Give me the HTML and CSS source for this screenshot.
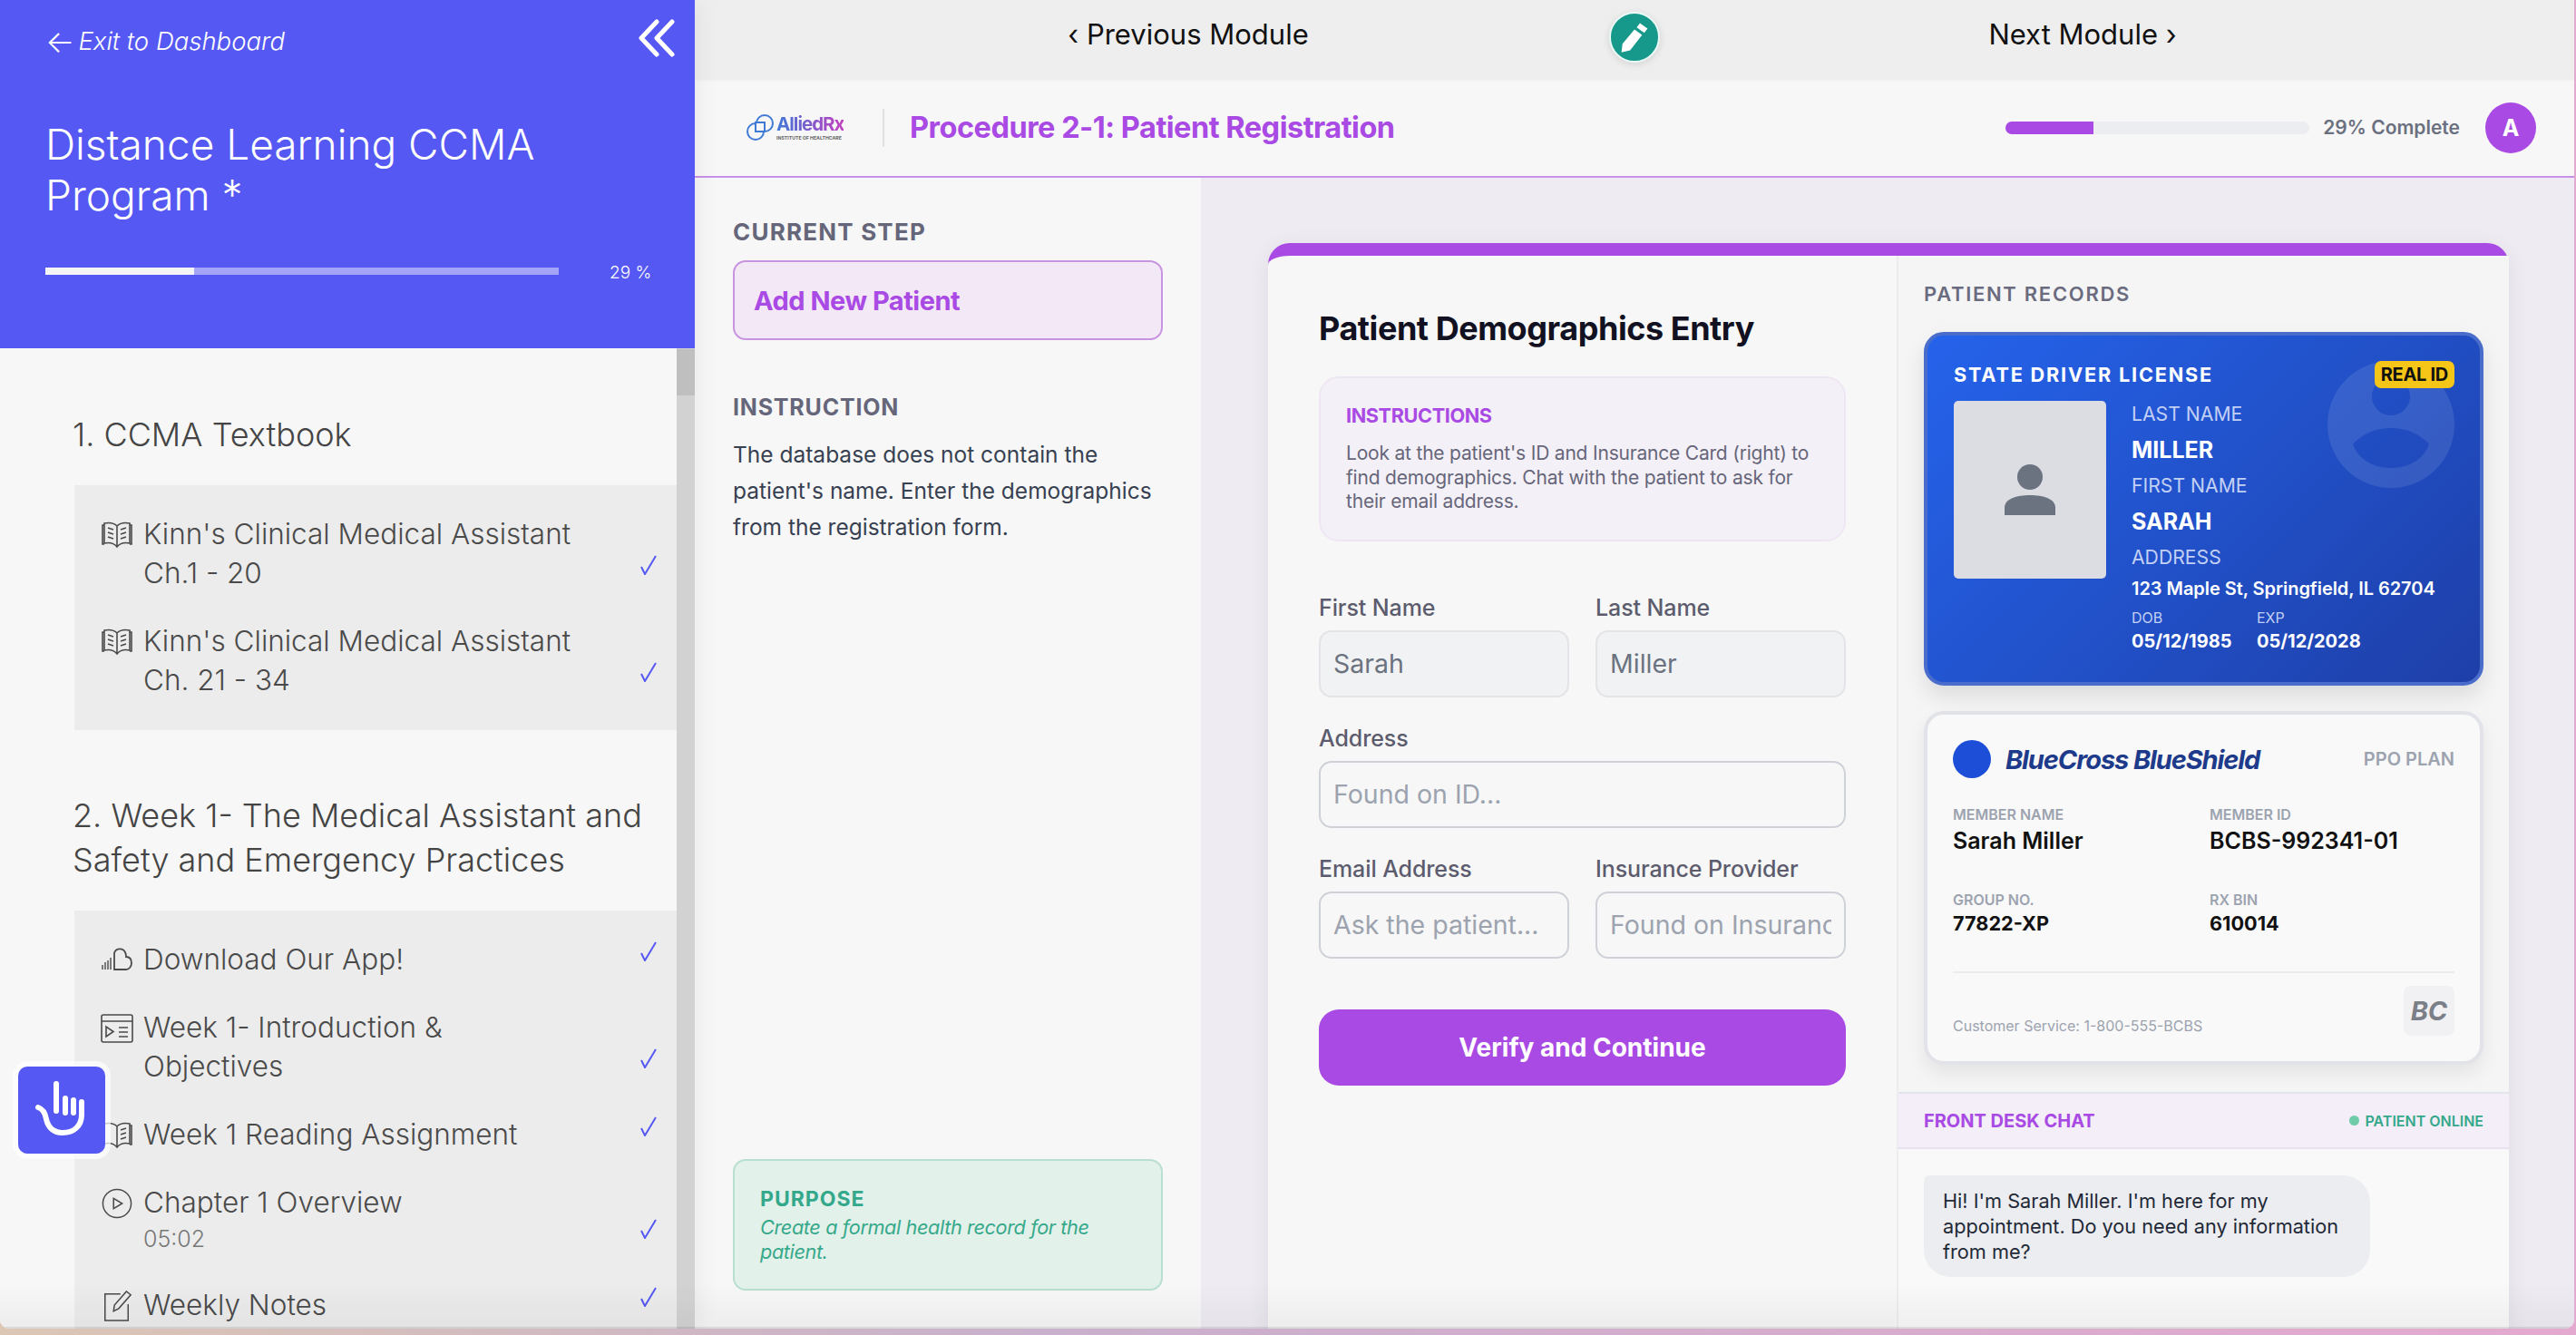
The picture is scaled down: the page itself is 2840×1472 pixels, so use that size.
FILE: index.html
```html
<!DOCTYPE html>
<html lang="en">
<head>
  <meta charset="UTF-8" />
  <title>Procedure 2-1: Patient Registration</title>
  <link rel="stylesheet" href="styles.css">
</head>
<body>
  <div class="frame">

    <aside class="sidebar">
      <div class="side-head">
        <div class="side-top">
          <a class="exit-link"><span class="exit-arrow">&#8592;</span>Exit to Dashboard</a>
          <svg class="collapse" width="40" height="42" viewBox="0 0 40 42" fill="none" stroke="#fff" stroke-width="5" stroke-linecap="round" stroke-linejoin="round">
            <path d="M20 3 3 21l17 18"></path>
            <path d="M37 3 20 21l17 18"></path>
          </svg>
        </div>
        <h1 class="course-title">Distance Learning CCMA Program *</h1>
        <div class="course-progress">
          <div class="course-bar"><div class="course-fill"></div></div>
          <span class="course-pct">29 %</span>
        </div>
      </div>

      <div class="side-body">
        <div class="side-list">
          <h3 class="section-title">1. CCMA Textbook</h3>
          <div class="lesson-group">
            <div class="lesson">
              <svg class="lesson-icon" viewBox="0 0 36 32" fill="none" stroke="#4a4a4a" stroke-width="1.6"><path d="M18 7C14 3 9 3 4 4v22c5-1 10-1 14 4 4-5 9-5 14-4V4c-5-1-10-1-14 3Zm0 0v23"></path><path d="M4 6H2v21h2M32 6h2v21h-2M8 9l6 2M8 14l6 2M8 19l6 2M28 9l-6 2M28 14l-6 2M28 19l-6 2"></path></svg>
              <div class="lesson-text">Kinn's Clinical Medical Assistant Ch.1 - 20</div>
              <svg class="check" width="20" height="22" viewBox="0 0 20 22" fill="none" stroke="#5558f2" stroke-width="2"><path d="M2 13l4 8L18 1"></path></svg>
            </div>
            <div class="lesson">
              <svg class="lesson-icon" viewBox="0 0 36 32" fill="none" stroke="#4a4a4a" stroke-width="1.6"><path d="M18 7C14 3 9 3 4 4v22c5-1 10-1 14 4 4-5 9-5 14-4V4c-5-1-10-1-14 3Zm0 0v23"></path><path d="M4 6H2v21h2M32 6h2v21h-2M8 9l6 2M8 14l6 2M8 19l6 2M28 9l-6 2M28 14l-6 2M28 19l-6 2"></path></svg>
              <div class="lesson-text">Kinn's Clinical Medical Assistant Ch. 21 - 34</div>
              <svg class="check" width="20" height="22" viewBox="0 0 20 22" fill="none" stroke="#5558f2" stroke-width="2"><path d="M2 13l4 8L18 1"></path></svg>
            </div>
          </div>

          <h3 class="section-title section-next">2. Week 1- The Medical Assistant and Safety and Emergency Practices</h3>
          <div class="lesson-group">
            <div class="lesson">
              <svg class="lesson-icon" viewBox="0 0 36 32" fill="none" stroke="#4a4a4a" stroke-width="1.4"><path d="M2 22v5M5 19v8M8 17v10M11 14v13"></path><path d="M15 27V9c1-5 9-7 12-1 1 2 1 3 1 5 4 0 6 3 6 7 0 4-3 7-6 7H15Z" stroke-width="1.8"></path></svg>
              <div class="lesson-text">Download Our App!</div>
              <svg class="check" width="20" height="22" viewBox="0 0 20 22" fill="none" stroke="#5558f2" stroke-width="2"><path d="M2 13l4 8L18 1"></path></svg>
            </div>
            <div class="lesson">
              <svg class="lesson-icon icon-tall" viewBox="0 0 36 32" fill="none" stroke="#4a4a4a" stroke-width="1.6"><rect x="1" y="1" width="34" height="30" rx="2"></rect><path d="M1 8h34M6 14v11l8-5.500ZM20 15h10M20 20h10M20 25h10"></path></svg>
              <div class="lesson-text">Week 1- Introduction &amp; Objectives</div>
              <svg class="check" width="20" height="22" viewBox="0 0 20 22" fill="none" stroke="#5558f2" stroke-width="2"><path d="M2 13l4 8L18 1"></path></svg>
            </div>
            <div class="lesson">
              <svg class="lesson-icon" viewBox="0 0 36 32" fill="none" stroke="#4a4a4a" stroke-width="1.6"><path d="M18 7C14 3 9 3 4 4v22c5-1 10-1 14 4 4-5 9-5 14-4V4c-5-1-10-1-14 3Zm0 0v23"></path><path d="M32 6h2v21h-2M28 9l-6 2M28 14l-6 2M28 19l-6 2"></path></svg>
              <div class="lesson-text">Week 1 Reading Assignment</div>
              <svg class="check" width="20" height="22" viewBox="0 0 20 22" fill="none" stroke="#5558f2" stroke-width="2"><path d="M2 13l4 8L18 1"></path></svg>
            </div>
            <div class="lesson">
              <svg class="lesson-icon icon-tall" viewBox="0 0 36 36" fill="none" stroke="#4a4a4a" stroke-width="1.6"><circle cx="18" cy="18" r="16.500"></circle><path d="M14 12v12l10-6Z"></path></svg>
              <div class="lesson-text">Chapter 1 Overview<div class="lesson-sub">05:02</div></div>
              <svg class="check" width="20" height="22" viewBox="0 0 20 22" fill="none" stroke="#5558f2" stroke-width="2"><path d="M2 13l4 8L18 1"></path></svg>
            </div>
            <div class="lesson">
              <svg class="lesson-icon icon-tall" viewBox="0 0 36 36" fill="none" stroke="#4a4a4a" stroke-width="1.6"><path d="M22 4H4v31h27V16"></path><path d="M14 24l1-7L29 1l5 4-14 16Z"></path></svg>
              <div class="lesson-text">Weekly Notes</div>
              <svg class="check" width="20" height="22" viewBox="0 0 20 22" fill="none" stroke="#5558f2" stroke-width="2"><path d="M2 13l4 8L18 1"></path></svg>
            </div>
          </div>
        </div>
        <div class="scrollbar"><div class="scroll-thumb"></div></div>
      </div>

      <div class="touch-btn">
        <svg width="60" height="66" viewBox="0 0 60 66" fill="none" stroke="#fff" stroke-width="6" stroke-linecap="round">
          <path d="M24 4v30"></path>
          <path d="M34 20v16M43 22v14M52 24v12"></path>
          <path d="M4 30c6 2 8 7 9 13 2 9 8 15 18 15 12 0 21-7 21-20"></path>
        </svg>
      </div>
    </aside>

    <main class="main">
      <nav class="module-nav">
        <a class="nav-link nav-prev">&#8249; Previous Module</a>
        <div class="pencil-btn">
          <svg width="34" height="36" viewBox="0 0 28 30" fill="#fff"><path d="M19 2l7 5-3 4-7-5ZM14 8l7 5-11 14-8 2 1-8Z"></path></svg>
        </div>
        <a class="nav-link nav-next">Next Module &#8250;</a>
      </nav>

      <header class="proc-header">
        <div class="logo">
          <svg width="31" height="29" viewBox="0 0 31 29" fill="none" stroke="#3f7bd4" stroke-width="2"><circle cx="20" cy="10" r="9"></circle><circle cx="10" cy="19" r="9"></circle><rect x="10" y="9" width="10" height="10" fill="#f7f7f7"></rect></svg>
          <div class="logo-text">
            <div class="logo-name">AlliedRx</div>
            <div class="logo-sub">INSTITUTE OF HEALTHCARE</div>
          </div>
        </div>
        <div class="header-rule"></div>
        <div class="proc-title">Procedure 2-1: Patient Registration</div>
        <div class="proc-progress">
          <div class="proc-bar"><div class="proc-fill"></div></div>
          <span class="proc-pct">29% Complete</span>
          <div class="avatar">A</div>
        </div>
      </header>

      <div class="workspace">
        <section class="steps">
          <div class="steps-label">CURRENT STEP</div>
          <div class="step-box">Add New Patient</div>
          <div class="steps-label steps-label-next">INSTRUCTION</div>
          <p class="step-text">The database does not contain the patient's name. Enter the demographics from the registration form.</p>
          <div class="purpose">
            <div class="purpose-title">PURPOSE</div>
            <div class="purpose-text">Create a formal health record for the patient.</div>
          </div>
        </section>

        <section class="stage">
          <div class="card">
            <div class="form-col">
              <h2 class="form-title">Patient Demographics Entry</h2>
              <div class="instructions">
                <div class="instructions-title">INSTRUCTIONS</div>
                <p class="instructions-text">Look at the patient's ID and Insurance Card (right) to find demographics. Chat with the patient to ask for their email address.</p>
              </div>
              <div class="form-grid">
                <label class="field"><span class="field-label">First Name</span><input class="field-input filled" value="Sarah" readonly></label>
                <label class="field"><span class="field-label">Last Name</span><input class="field-input filled" value="Miller" readonly></label>
                <label class="field field-wide"><span class="field-label">Address</span><input class="field-input" placeholder="Found on ID..."></label>
                <label class="field"><span class="field-label">Email Address</span><input class="field-input" placeholder="Ask the patient..."></label>
                <label class="field"><span class="field-label">Insurance Provider</span><input class="field-input" placeholder="Found on Insurance Card..."></label>
              </div>
              <button class="verify-btn">Verify and Continue</button>
            </div>

            <div class="records-col">
              <div class="records">
                <div class="records-title">PATIENT RECORDS</div>

                <div class="license">
                  <svg class="license-mark" width="140" height="140" viewBox="0 0 140 140" fill="#fff" fill-opacity="0.1" fill-rule="evenodd"><path d="M70 0a70 70 0 1 0 0 140A70 70 0 0 0 70 0ZM70 18c11.500 0 21 9.500 21 21s-9.500 21-21 21-21-9.500-21-21 9.500-21 21-21ZM28 92c10-12 26-18 42-18s32 6 42 18c-6 16-22 26-42 26s-36-10-42-26Z"></path></svg>
                  <div class="license-top">
                    <div class="license-title">STATE DRIVER LICENSE</div>
                    <div class="real-id">REAL ID</div>
                  </div>
                  <div class="license-body">
                    <div class="license-photo">
                      <svg width="56" height="56" viewBox="0 0 56 56" fill="#6b7280"><ellipse cx="28" cy="14" rx="14" ry="14"></ellipse><path d="M0 56V48C0 38 13 34 28 34s28 4 28 14v8Z"></path></svg>
                    </div>
                    <div class="license-info">
                      <div class="lic-label">LAST NAME</div>
                      <div class="lic-value">MILLER</div>
                      <div class="lic-label">FIRST NAME</div>
                      <div class="lic-value">SARAH</div>
                      <div class="lic-label">ADDRESS</div>
                      <div class="lic-address">123 Maple St, Springfield, IL 62704</div>
                      <div class="lic-dates">
                        <div class="lic-small">DOB</div>
                        <div class="lic-small">EXP</div>
                        <div class="lic-date">05/12/1985</div>
                        <div class="lic-date">05/12/2028</div>
                      </div>
                    </div>
                  </div>
                </div>

                <div class="insurance">
                  <div class="ins-top">
                    <div class="ins-dot"></div>
                    <div class="ins-brand">BlueCross BlueShield</div>
                    <div class="ins-plan">PPO PLAN</div>
                  </div>
                  <div class="ins-grid">
                    <div><div class="ins-label">MEMBER NAME</div><div class="ins-value">Sarah Miller</div></div>
                    <div><div class="ins-label">MEMBER ID</div><div class="ins-value">BCBS-992341-01</div></div>
                    <div class="ins-row2"><div class="ins-label">GROUP NO.</div><div class="ins-value-sm">77822-XP</div></div>
                    <div class="ins-row2"><div class="ins-label">RX BIN</div><div class="ins-value-sm">610014</div></div>
                  </div>
                  <div class="ins-foot">
                    <div class="ins-service">Customer Service: 1-800-555-BCBS</div>
                    <div class="ins-badge">BC</div>
                  </div>
                </div>
              </div>

              <div class="chat-head">
                <div class="chat-title">FRONT DESK CHAT</div>
                <div class="chat-status"><span class="status-dot"></span>PATIENT ONLINE</div>
              </div>
              <div class="chat-body">
                <div class="bubble">Hi! I'm Sarah Miller. I'm here for my appointment. Do you need any information from me?</div>
              </div>
            </div>
          </div>
        </section>
      </div>
    </main>

    <div class="bottom-fade"></div>
  </div>
</body>
</html>
```

FILE: styles.css
```css
* {
  margin: 0;
  padding: 0;
  box-sizing: border-box;
}
html, body {
  height: 100%;
}
body {
  background: linear-gradient(to right, #dcc6b4, #c9b0cc 40%, #e4a9cf);
  overflow: hidden;
  font-family: Inter, "Liberation Sans", sans-serif;
}
.frame {
  position: relative;
  width: 2838px;
  height: 1465px;
  display: flex;
  overflow: hidden;
  border-radius: 0 0 10px 10px;
  background: #f7f7f7;
}

/* sidebar */
.sidebar {
  width: 766px;
  flex-shrink: 0;
  display: flex;
  flex-direction: column;
  position: relative;
  background: #f7f7f7;
  z-index: 2;
  box-shadow: 4px 0 24px rgba(0, 0, 0, 0.06);
}
.side-head {
  height: 384px;
  flex-shrink: 0;
  background: #5558f2;
  color: white;
  padding: 0 21px 0 50px;
}
.side-top {
  height: 90px;
  display: flex;
  justify-content: space-between;
  align-items: center;
}
.exit-link {
  font-size: 27.500px;
  font-style: italic;
  font-weight: 300;
  display: flex;
  align-items: center;
}
.exit-arrow {
  font-style: normal;
  font-size: 34px;
  margin-right: 4px;
}
.collapse {
  margin-top: -6px;
  margin-right: 1px;
}
.course-title {
  margin-top: 41px;
  font-size: 46px;
  font-weight: 300;
  line-height: 56px;
  max-width: 640px;
}
.course-progress {
  margin-top: 48px;
  display: flex;
  align-items: center;
  height: 16px;
}
.course-bar {
  width: 566px;
  height: 8px;
  background: #a3a4f6;
}
.course-fill {
  width: 29%;
  height: 100%;
  background: #f5f5f5;
}
.course-pct {
  margin-left: 56px;
  margin-top: 2px;
  font-size: 19px;
  font-weight: 300;
}
.side-body {
  flex: 1;
  min-height: 0;
  display: flex;
  overflow: hidden;
}
.side-list {
  flex: 1;
  padding-top: 71px;
  min-width: 0;
}
.section-title {
  margin-left: 80px;
  margin-right: 20px;
  font-size: 36px;
  font-weight: 300;
  line-height: 49px;
  color: #444;
}
.section-next {
  margin-top: 70px;
}
.lesson-group {
  margin-top: 31px;
  margin-left: 82px;
  background: #ececec;
  padding: 32px 21px 34px 29px;
  display: flex;
  flex-direction: column;
  gap: 32px;
}
.lesson {
  display: flex;
  font-size: 31.500px;
  font-weight: 300;
  line-height: 43px;
  color: #4a4a4a;
}
.lesson-icon {
  width: 36px;
  height: 32px;
  flex-shrink: 0;
  margin-top: 6px;
  margin-right: 11px;
}
.icon-tall {
  height: 34px;
}
.lesson-text {
  flex: 1;
  max-width: 480px;
}
.lesson-sub {
  font-size: 25px;
  line-height: 38px;
  color: #777;
}
.check {
  margin-left: auto;
  align-self: flex-end;
  margin-bottom: 19px;
  flex-shrink: 0;
}
.scrollbar {
  width: 20px;
  flex-shrink: 0;
  background: #d2d2d2;
}
.scroll-thumb {
  height: 51px;
  margin-top: 1px;
  background: #bfbfbf;
}
.touch-btn {
  position: absolute;
  left: 20px;
  top: 1176px;
  width: 96px;
  height: 96px;
  background: #5558f2;
  border-radius: 10px;
  box-shadow: 0 0 0 6px rgba(255, 255, 255, 0.7);
  display: flex;
  justify-content: center;
  align-items: center;
}

/* main */
.main {
  flex: 1;
  min-width: 0;
  display: flex;
  flex-direction: column;
}
.module-nav {
  height: 87px;
  flex-shrink: 0;
  background: #eee;
  display: grid;
  grid-template-columns: 1fr auto 1fr;
  align-items: center;
  box-shadow: 0 1px 3px rgba(0, 0, 0, 0.06);
  position: relative;
}
.nav-link {
  font-size: 31px;
  color: #111;
  text-align: center;
  margin-top: -12px;
}
.nav-prev {
  padding-left: 80px;
}
.nav-next {
  padding-right: 76px;
}
.pencil-btn {
  width: 56px;
  height: 56px;
  border-radius: 50%;
  background: #16988a;
  border: 2px solid #eafaf6;
  box-shadow: 0 2px 8px rgba(0, 0, 0, 0.12);
  display: flex;
  justify-content: center;
  align-items: center;
  margin-top: -6px;
}
.proc-header {
  height: 109px;
  flex-shrink: 0;
  background: #f7f7f7;
  border-bottom: 2px solid #c891e8;
  display: flex;
  align-items: center;
  padding: 0 42px 0 57px;
}
.logo {
  display: flex;
  align-items: center;
  gap: 2px;
  width: 150px;
}
.logo-name {
  font-size: 20.500px;
  font-weight: 700;
  letter-spacing: -1px;
  line-height: 22px;
  background: linear-gradient(to right, #3f78d8, #c23fc0);
  -webkit-background-clip: text;
  background-clip: text;
  color: transparent;
}
.logo-sub {
  font-size: 5.200px;
  font-weight: 700;
  line-height: 8px;
  color: #666;
}
.header-rule {
  width: 2px;
  height: 42px;
  background: #e0e0e0;
}
.proc-title {
  margin-left: 28px;
  font-size: 32.500px;
  font-weight: 700;
  letter-spacing: -0.5px;
  color: #a94ae4;
}
.proc-progress {
  margin-left: auto;
  display: flex;
  align-items: center;
}
.proc-bar {
  width: 335px;
  height: 14px;
  background: #ecedf0;
  border-radius: 7px;
  overflow: hidden;
}
.proc-fill {
  width: 29%;
  height: 100%;
  background: #a94ae4;
}
.proc-pct {
  margin-left: 15px;
  font-size: 21px;
  font-weight: 600;
  color: #6b7080;
}
.avatar {
  margin-left: 28px;
  width: 56px;
  height: 56px;
  border-radius: 50%;
  background: #a94ae4;
  color: white;
  font-size: 25px;
  font-weight: 700;
  display: flex;
  justify-content: center;
  align-items: center;
}
.workspace {
  flex: 1;
  min-height: 0;
  display: flex;
}

/* left steps column */
.steps {
  width: 558px;
  flex-shrink: 0;
  background: #f7f7f7;
  padding: 45px 42px 42px;
  display: flex;
  flex-direction: column;
}
.steps-label {
  font-size: 26px;
  font-weight: 700;
  letter-spacing: 1.200px;
  line-height: 30px;
  color: #66667a;
}
.steps-label-next {
  margin-top: 59px;
  font-size: 25px;
  letter-spacing: 0.800px;
}
.step-box {
  margin-top: 16px;
  height: 88px;
  background: #f3e9f6;
  border: 2px solid #c893e0;
  border-radius: 14px;
  padding-left: 21px;
  display: flex;
  align-items: center;
  font-size: 29px;
  font-weight: 700;
  letter-spacing: -0.500px;
  color: #a94ae4;
}
.step-text {
  margin-top: 17px;
  font-size: 24.500px;
  line-height: 40px;
  color: #374151;
}
.purpose {
  margin-top: auto;
  background: #e3f1eb;
  border: 2px solid #b8dfd0;
  border-radius: 14px;
  padding: 28px 28px;
}
.purpose-title {
  font-size: 23px;
  font-weight: 700;
  letter-spacing: 1px;
  line-height: 28px;
  color: #34a88a;
}
.purpose-text {
  margin-top: 4px;
  font-size: 21.700px;
  font-style: italic;
  letter-spacing: -0.400px;
  line-height: 26.500px;
  color: #36a98a;
}

/* card */
.stage {
  flex: 1;
  min-width: 0;
  background: #eeebf3;
  padding: 72px 72px 0 74px;
}
.card {
  height: 100%;
  min-height: 1200px;
  background: #f7f7f7;
  border-top: 14px solid #a94ae4;
  border-radius: 24px 24px 0 0;
  box-shadow: 0 4px 24px rgba(0, 0, 0, 0.07);
  display: flex;
}
.form-col {
  width: 695px;
  flex-shrink: 0;
  padding: 58px 56px 0 56px;
  border-right: 2px solid #ededf0;
}
.form-title {
  font-size: 36px;
  font-weight: 700;
  line-height: 44px;
  letter-spacing: -0.450px;
  color: #111122;
}
.instructions {
  margin-top: 31px;
  background: #f4f0f7;
  border: 2px solid #efe6f3;
  border-radius: 22px;
  padding: 28px 28px;
}
.instructions-title {
  font-size: 21.700px;
  font-weight: 700;
  line-height: 26px;
  letter-spacing: -0.400px;
  color: #a94ae4;
}
.instructions-text {
  margin-top: 16px;
  font-size: 21px;
  line-height: 26.500px;
  letter-spacing: -0.200px;
  color: #66667a;
}
.form-grid {
  margin-top: 58px;
  display: grid;
  grid-template-columns: 1fr 1fr;
  column-gap: 29px;
  row-gap: 30px;
}
.field {
  display: flex;
  flex-direction: column;
  min-width: 0;
}
.field-wide {
  grid-column: span 2;
}
.field-label {
  font-size: 25px;
  font-weight: 500;
  line-height: 30px;
  letter-spacing: -0.100px;
  color: #5c5c6e;
  margin-bottom: 10px;
}
.field-input {
  width: 100%;
  height: 74px;
  border: 2px solid #cfd1d8;
  border-radius: 14px;
  background: #f7f7f7;
  padding: 0 14px;
  font-family: Inter, "Liberation Sans", sans-serif;
  font-size: 28.500px;
  color: #6b7280;
  outline: none;
}
.field-input::placeholder {
  color: #9ca3af;
  opacity: 1;
}
.filled {
  background: #f1f2f4;
  border-color: #e3e3e8;
}
.verify-btn {
  margin-top: 56px;
  width: 100%;
  height: 84px;
  background: #a94ae4;
  color: white;
  border: none;
  border-radius: 22px;
  font-family: Inter, "Liberation Sans", sans-serif;
  font-size: 28px;
  font-weight: 700;
}

/* records column */
.records-col {
  flex: 1;
  min-width: 0;
  background: #f5f5f6;
  display: flex;
  flex-direction: column;
}
.records {
  padding: 29px 28px 30px;
}
.records-title {
  font-size: 22px;
  font-weight: 600;
  letter-spacing: 1.700px;
  line-height: 26px;
  color: #6b6b80;
}
.license {
  position: relative;
  margin-top: 29px;
  height: 390px;
  border: 4px solid #4a6ccb;
  border-radius: 22px;
  background: linear-gradient(135deg, #2563eb, #1e3fa8);
  padding: 28px 28px 0 29px;
  color: white;
  box-shadow: 0 12px 24px rgba(0, 0, 0, 0.1);
}
.license-mark {
  position: absolute;
  right: 28px;
  top: 28px;
}
.license-top {
  position: relative;
  display: flex;
  justify-content: space-between;
  align-items: center;
  height: 30px;
}
.license-title {
  font-size: 21.700px;
  font-weight: 700;
  letter-spacing: 1.800px;
}
.real-id {
  height: 30px;
  padding: 0 7px;
  background: #f5c518;
  border-radius: 7px;
  font-size: 20px;
  font-weight: 700;
  line-height: 30px;
  letter-spacing: -0.300px;
  color: #111;
}
.license-body {
  position: relative;
  margin-top: 9px;
  display: flex;
  gap: 28px;
}
.license-photo {
  margin-top: 5px;
  width: 168px;
  height: 196px;
  flex-shrink: 0;
  background: #dcdde2;
  border-radius: 5px;
  display: flex;
  justify-content: center;
  align-items: center;
}
.lic-label {
  font-size: 21.200px;
  line-height: 39.500px;
  color: #c3d0f5;
}
.lic-value {
  font-size: 25px;
  font-weight: 700;
  line-height: 39.500px;
}
.lic-address {
  font-size: 20px;
  font-weight: 600;
  line-height: 29px;
  letter-spacing: -0.050px;
  white-space: nowrap;
}
.lic-dates {
  margin-top: 6px;
  display: grid;
  grid-template-columns: 138px auto;
}
.lic-small {
  font-size: 16px;
  line-height: 22px;
  color: #c3d0f5;
}
.lic-date {
  font-size: 20px;
  font-weight: 700;
  line-height: 30px;
}
.insurance {
  margin-top: 28px;
  height: 390px;
  border: 4px solid #e2e3e8;
  border-radius: 22px;
  background: #f9f9f9;
  padding: 28px 28px 0 28px;
  box-shadow: 0 10px 20px rgba(0, 0, 0, 0.07);
}
.ins-top {
  display: flex;
  align-items: center;
  height: 42px;
}
.ins-dot {
  width: 42px;
  height: 42px;
  border-radius: 50%;
  background: #1d4ed8;
}
.ins-brand {
  margin-left: 16px;
  font-size: 29px;
  font-weight: 700;
  font-style: italic;
  letter-spacing: -1.100px;
  color: #1e3a8a;
}
.ins-plan {
  margin-left: auto;
  font-size: 20px;
  font-weight: 600;
  color: #9ca3af;
}
.ins-grid {
  margin-top: 30px;
  display: grid;
  grid-template-columns: 283px auto;
  padding-bottom: 39px;
  border-bottom: 2px solid #ececf0;
}
.ins-row2 {
  margin-top: 40px;
}
.ins-label {
  font-size: 16px;
  font-weight: 600;
  line-height: 20px;
  color: #9ca3af;
}
.ins-value {
  margin-top: 4px;
  font-size: 25px;
  font-weight: 600;
  line-height: 30px;
  color: #111;
}
.ins-value-sm {
  margin-top: 2px;
  font-size: 21.700px;
  font-weight: 700;
  line-height: 28px;
  color: #111;
}
.ins-foot {
  margin-top: 14px;
  display: flex;
  justify-content: space-between;
  align-items: flex-end;
}
.ins-service {
  font-size: 16px;
  line-height: 20px;
  color: #9ca3af;
  margin-bottom: 1px;
}
.ins-badge {
  width: 56px;
  height: 55px;
  background: #f1f1f3;
  border-radius: 8px;
  font-size: 29px;
  font-weight: 700;
  font-style: italic;
  color: #7b7f88;
  display: flex;
  justify-content: center;
  align-items: center;
}
.chat-head {
  height: 63px;
  background: #f3eef7;
  border-top: 2px solid #e4e5ec;
  border-bottom: 2px solid #e9e0f0;
  padding: 0 28px;
  display: flex;
  justify-content: space-between;
  align-items: center;
}
.chat-title {
  font-size: 20px;
  font-weight: 700;
  color: #a94ae4;
}
.chat-status {
  display: flex;
  align-items: center;
  gap: 7px;
  font-size: 16px;
  font-weight: 600;
  color: #34a88a;
}
.status-dot {
  width: 11px;
  height: 11px;
  border-radius: 50%;
  background: #6fcba8;
}
.chat-body {
  flex: 1;
  padding: 29px 28px;
  background: #f9f9f9;
}
.bubble {
  width: 492px;
  background: #ecedf0;
  border-radius: 6px 30px 30px 30px;
  padding: 14px 21px;
  font-size: 21.700px;
  line-height: 28px;
  color: #1f2937;
}
.bottom-fade {
  position: absolute;
  left: 0;
  right: 0;
  bottom: 0;
  height: 50px;
  background: linear-gradient(to bottom, rgba(0, 0, 0, 0), rgba(0, 0, 0, 0.04));
  border-bottom: 2px solid rgba(0, 0, 0, 0.12);
  z-index: 3;
  pointer-events: none;
}
```
